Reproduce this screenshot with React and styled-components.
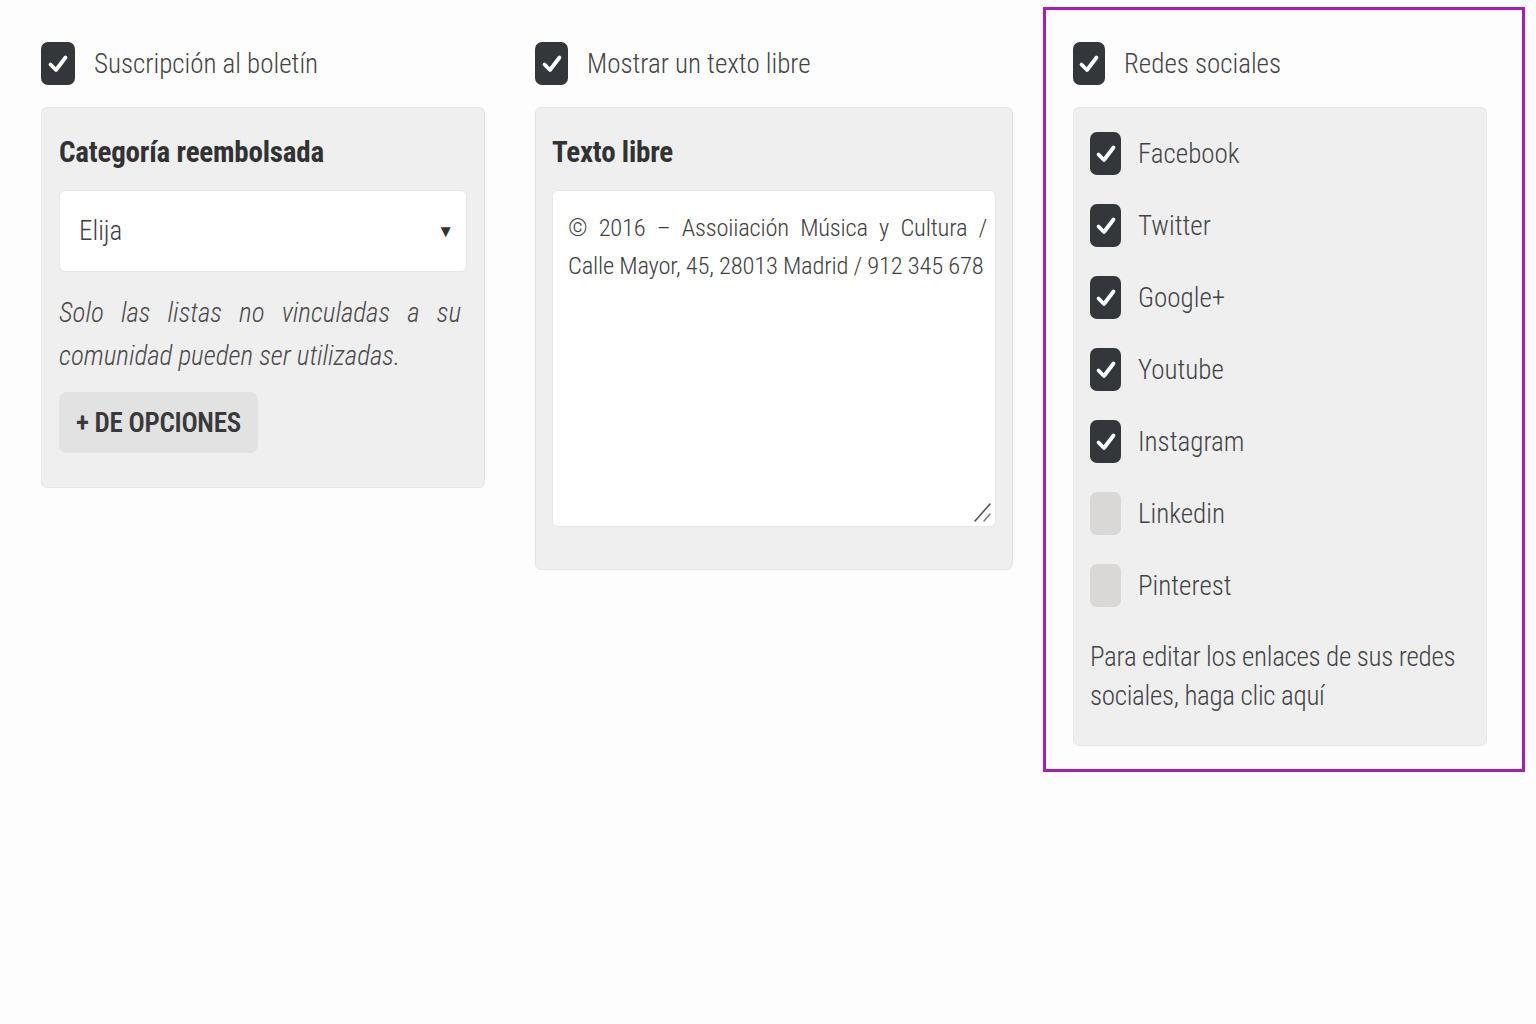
import React from "react";
import styled, { createGlobalStyle } from "styled-components";

const GlobalStyle = createGlobalStyle`
  body {
    margin: 0;
    background: #fdfdfd;
    font-family: "Roboto", "Liberation Sans", sans-serif;
    font-stretch: 75%;
    font-variation-settings: "wdth" 75;
    font-weight: 330;
    color: #3d3d3f;
  }
`;

const Page = styled.div`
  display: flex;
  align-items: flex-start;
  padding: 7px 0 0 41px;
  min-height: 1017px;
  box-sizing: border-box;
`;

const Column = styled.div`
  width: ${(p) => p.$width}px;
  margin-top: ${(p) => p.$top || 0}px;
  margin-right: ${(p) => p.$gap || 0}px;
  flex-shrink: 0;
`;

const Highlight = styled.div`
  border: 3px solid #a61fb5;
  padding: 32px 35px 23px 27px;
  width: 482px;
  box-sizing: border-box;
  flex-shrink: 0;
`;

const Toggle = styled.label`
  display: flex;
  align-items: center;
  gap: ${(p) => p.$gap || 19}px;
  font-size: 27px;
  color: #434345;
  height: 43px;
`;

const Box = styled.span`
  width: ${(p) => p.$w || 34}px;
  height: 43px;
  border-radius: 7px;
  background: ${(p) => (p.$checked ? "#33363a" : "#d9d8d7")};
  display: flex;
  align-items: center;
  justify-content: center;
  flex-shrink: 0;
`;

const Panel = styled.div`
  margin-top: 22px;
  background: #efeff0;
  border: 1px solid #e5e5e7;
  border-radius: 6px;
  padding: ${(p) => p.$pad || "24px 17px 34px 17px"};
  box-sizing: border-box;
`;

const Heading = styled.h3`
  margin: 0 0 18px;
  font-size: 29px;
  font-weight: 700;
  letter-spacing: -0.2px;
  color: #323234;
  line-height: 40px;
`;

const Select = styled.div`
  height: 82px;
  background: #fff;
  border: 1px solid #e6e6e8;
  border-radius: 6px;
  box-sizing: border-box;
  display: flex;
  align-items: center;
  justify-content: space-between;
  padding: 0 12px 0 19px;
  font-size: 27px;
  color: #3d3d3f;
`;

const Arrow = styled.span`
  font-size: 17px;
  color: #333;
`;

const Hint = styled.p`
  margin: 20px 6px 14px 0;
  font-style: italic;
  font-size: 27px;
  line-height: 43px;
  text-align: justify;
  color: #4a4a4c;
`;

const MoreButton = styled.button`
  font-family: inherit;
  font-stretch: inherit;
  font-variation-settings: inherit;
  letter-spacing: -0.3px;
  font-size: 27px;
  font-weight: 600;
  color: #39393b;
  background: #e2e2e3;
  border: none;
  border-radius: 8px;
  height: 61px;
  padding: 0 17px;
`;

const FieldWrap = styled.div`
  position: relative;
`;

const TextArea = styled.textarea`
  display: block;
  width: 100%;
  height: 337px;
  box-sizing: border-box;
  background: #fff;
  border: 1px solid #e6e6e8;
  border-radius: 6px;
  padding: 18px 8px 12px 15px;
  font-family: inherit;
  font-stretch: inherit;
  font-variation-settings: inherit;
  font-weight: inherit;
  font-size: 24.5px;
  letter-spacing: -0.2px;
  line-height: 38px;
  color: #404042;
  text-align: justify;
  resize: none;
  outline: none;
`;

const Grip = styled.svg`
  position: absolute;
  right: 3px;
  bottom: 4px;
  pointer-events: none;
`;

const SocialList = styled.div`
  display: flex;
  flex-direction: column;
  gap: 29px;
`;

const Note = styled.p`
  margin: 31px 0 0;
  font-size: 27px;
  letter-spacing: -0.3px;
  line-height: 39px;
  color: #434345;
`;

const Check = () => (
  <svg width="22" height="22" viewBox="0 0 22 22">
    <path d="M3.5 11.5 L9 17 L18.5 4.5" fill="none" stroke="#fff" strokeWidth="3.8" strokeLinecap="round" strokeLinejoin="round" />
  </svg>
);

const CheckRow = ({ checked, label, gap, w }) => (
  <Toggle $gap={gap}>
    <Box $checked={checked} $w={w}>{checked && <Check />}</Box>
    {label}
  </Toggle>
);

const networks = [
  ["Facebook", true],
  ["Twitter", true],
  ["Google+", true],
  ["Youtube", true],
  ["Instagram", true],
  ["Linkedin", false],
  ["Pinterest", false],
];

export default function App() {
  return (
    <>
      <GlobalStyle />
      <Page>
        <Column $width={444} $top={35} $gap={50}>
          <CheckRow checked label="Suscripción al boletín" />
          <Panel>
            <Heading>Categoría reembolsada</Heading>
            <Select>
              Elija
              <Arrow>▼</Arrow>
            </Select>
            <Hint>Solo las listas no vinculadas a su comunidad pueden ser utilizadas.</Hint>
            <MoreButton>+ DE OPCIONES</MoreButton>
          </Panel>
        </Column>
        <Column $width={478} $top={35} $gap={30}>
          <CheckRow checked label="Mostrar un texto libre" w={33} />
          <Panel $pad="24px 16px 42px 16px">
            <Heading>Texto libre</Heading>
            <FieldWrap>
              <TextArea
                defaultValue="© 2016 – Assoiiación Música y Cultura / Calle Mayor, 45, 28013 Madrid / 912 345 678"
              />
              <Grip width="20" height="22" viewBox="0 0 20 22">
                <path d="M2 20 L17 3" stroke="#555" strokeWidth="1.6" strokeLinecap="round" />
                <path d="M11 20 L17 13" stroke="#777" strokeWidth="1.4" strokeLinecap="round" />
              </Grip>
            </FieldWrap>
          </Panel>
        </Column>
        <Highlight>
          <CheckRow checked label="Redes sociales" w={32} />
          <Panel $pad="24px 17px 29px 16px">
            <SocialList>
              {networks.map(([name, on]) => (
                <CheckRow key={name} checked={on} label={name} w={31} gap={17} />
              ))}
            </SocialList>
            <Note>Para editar los enlaces de sus redes sociales, haga clic aquí</Note>
          </Panel>
        </Highlight>
      </Page>
    </>
  );
}
